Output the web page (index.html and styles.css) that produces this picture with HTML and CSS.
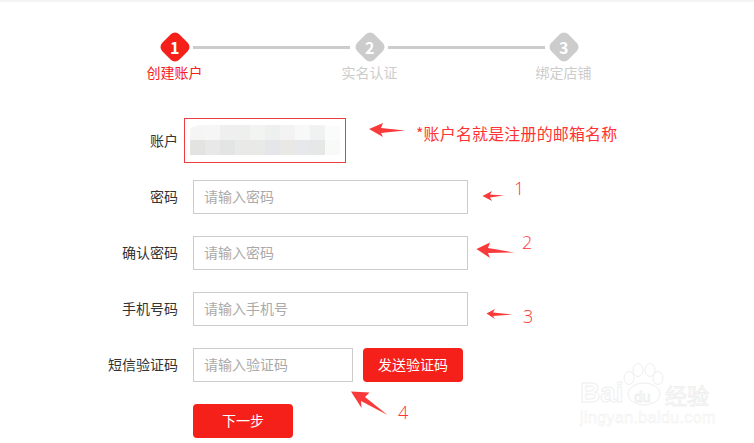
FILE: index.html
```html
<!DOCTYPE html>
<html lang="en">
<head>
    <meta charset="UTF-8">
    <title>创建账户</title>
    <link rel="stylesheet" href="styles.css">
</head>
<body>
    <div class="page">
        <div class="steps">
            <div class="step active">
                <div class="step-mark"><span>1</span></div>
                <div class="step-label">创建账户</div>
            </div>
            <div class="step-line"></div>
            <div class="step">
                <div class="step-mark"><span>2</span></div>
                <div class="step-label">实名认证</div>
            </div>
            <div class="step-line"></div>
            <div class="step">
                <div class="step-mark"><span>3</span></div>
                <div class="step-label">绑定店铺</div>
            </div>
        </div>

        <form class="form">
            <div class="row">
                <label class="row-label">账户</label>
                <div class="account">
                    <div class="blur-top"></div>
                    <div class="blur-bottom"></div>
                    <div class="account-mark"></div>
                </div>
            </div>
            <div class="row">
                <label class="row-label">密码</label>
                <input class="input" type="text" placeholder="请输入密码">
            </div>
            <div class="row">
                <label class="row-label">确认密码</label>
                <input class="input" type="text" placeholder="请输入密码">
            </div>
            <div class="row">
                <label class="row-label">手机号码</label>
                <input class="input" type="text" placeholder="请输入手机号">
            </div>
            <div class="row">
                <label class="row-label">短信验证码</label>
                <input class="input input-short" type="text" placeholder="请输入验证码">
                <button class="btn btn-send" type="button">发送验证码</button>
            </div>
            <div class="row row-last">
                <button class="btn" type="button">下一步</button>
            </div>
        </form>

        <!-- red notes drawn over the screenshot -->
        <svg class="arrows" width="754" height="443" viewBox="0 0 754 443">
            <polygon points="369,129 383,123 381,128 405,130.5 381,133 383,137"/>
            <polygon points="482.5,196 492,191 490,194.5 504,195.5 490,197.5 492,201"/>
            <polygon points="476.5,249 490,242.5 488,248 514.5,252.5 488,253 490,258"/>
            <polygon points="486.5,313.5 495,309 493,312.5 512.5,314.5 493,316 495,319"/>
            <polygon points="351,391.5 369.5,392.5 365,397 387.5,415 361,401 361.5,408"/>
        </svg>
        <span class="note note-main">*账户名就是注册的邮箱名称</span>
        <span class="note note-num note-1">1</span>
        <span class="note note-num note-2">2</span>
        <span class="note note-num note-3">3</span>
        <span class="note note-num note-4">4</span>

        <!-- watermark -->
        <div class="watermark">
            <svg class="paw" width="46" height="46" viewBox="0 0 46 46">
                <ellipse cx="8" cy="15" rx="5" ry="6.5"/>
                <ellipse cx="17" cy="7" rx="5" ry="6.5"/>
                <ellipse cx="29" cy="7" rx="5" ry="6.5"/>
                <ellipse cx="37" cy="15" rx="5" ry="6.5"/>
                <ellipse cx="23" cy="31" rx="16" ry="11"/>
            </svg>
            <span class="wm-bai">Bai</span>
            <span class="wm-du">du</span>
            <span class="wm-cn">经验</span>
            <span class="wm-url">jingyan.baidu.com</span>
        </div>
    </div>
</body>
</html>
```
FILE: styles.css
```css
* {
    box-sizing: border-box;
}
body {
    margin: 0;
    background-color: #fff;
    font-family: "Noto Sans CJK SC", "Noto Sans", sans-serif;
    font-size: 14px;
    color: #333;
}
.page {
    position: relative;
    width: 754px;
    height: 443px;
    overflow: hidden;
}

/* steps */
.steps {
    display: flex;
    align-items: flex-start;
    padding: 30px 0 0 160px;
    border-top: 2px solid #f4f4f4;
}
.step {
    display: flex;
    flex-direction: column;
    align-items: center;
    width: 29px;
    color: #ccc;
}
.step-mark {
    display: flex;
    align-items: center;
    justify-content: center;
    flex: none;
    width: 24px;
    height: 24px;
    margin: 2.5px;
    border-radius: 6px;
    background-color: #ccc;
    transform: rotate(45deg);
}
.step-mark span {
    transform: rotate(-45deg);
    color: #fff;
    font-size: 16px;
    font-weight: 700;
    line-height: 1;
}
.step-label {
    flex: none;
    margin-top: 1px;
    line-height: 20px;
    white-space: nowrap;
}
.step.active {
    color: #f5201a;
}
.step.active .step-mark {
    background-color: #f5201a;
}
.step-line {
    flex: none;
    width: 157px;
    height: 3px;
    margin: 14px 5px 0 4px;
    background-color: #ccc;
}
.step-line + .step + .step-line {
    margin-right: 4px;
}

/* form */
.form {
    margin-top: 42px;
}
.row {
    display: flex;
    align-items: center;
    gap: 15px;
    height: 34px;
    margin-bottom: 22px;
}
.row-label {
    flex: none;
    width: 178px;
    padding-bottom: 2px;
    text-align: right;
}
.row-last {
    margin-bottom: 0;
    padding-left: 193px;
}
.input {
    width: 275px;
    height: 34px;
    padding: 0 10px 2px;
    border: 1px solid #ccc;
    outline: none;
    font: inherit;
    color: #333;
}
.input::placeholder {
    color: #aaa;
    opacity: 1;
}
.input-short {
    width: 160px;
}
.btn {
    width: 100px;
    height: 34px;
    padding: 0 0 2px;
    border: 0;
    border-radius: 4px;
    background-color: #f5201a;
    color: #fff;
    font: inherit;
}
.btn-send {
    margin-left: -5px;
}

/* blurred account name */
.account {
    position: relative;
    align-self: flex-start;
    width: 150px;
    margin: 1px 0 0 -3px;
}
.blur-top,
.blur-bottom {
    height: 15px;
}
.blur-top {
    border-radius: 16px 30px 0 0 / 5px 3px 0 0;
    background: linear-gradient(90deg, #f5f5f5 0 15px, #f6f6f6 15px 30px, #efefef 30px 45px, #edf0ef 45px 60px, #f3f3f1 60px 75px, #eef0ef 75px 90px, #f3f3f3 90px 105px, #f8f8f8 105px 120px, #f0f2f1 120px 135px, #fbfbfb 135px);
}
.blur-bottom {
    background: linear-gradient(90deg, #e3e3e2 0 15px, #e8e8e8 15px 30px, #e3e5e4 30px 45px, #e9e9e8 45px 75px, #e5e6ea 75px 90px, #e9e8e7 90px 105px, #e7e8ec 105px 120px, #e6e8e8 120px 135px, #f9f9f8 135px);
}
.account-mark {
    position: absolute;
    left: -6px;
    top: -7px;
    width: 162px;
    height: 45px;
    border: 1px solid #f03c3c;
}

/* notes over the screenshot */
.arrows {
    position: absolute;
    left: 0;
    top: 0;
}
.arrows polygon {
    fill: #f83a3a;
}
.note {
    position: absolute;
    color: #f33;
    font-size: 16px;
    line-height: 20px;
    letter-spacing: 0.15px;
    white-space: nowrap;
}
.note-num {
    font-family: "Open Sans", sans-serif;
    font-size: 18px;
    font-weight: 300;
}
.note-main { left: 416px; top: 123px; }
.note-1 { left: 514px; top: 178px; }
.note-2 { left: 522px; top: 232px; }
.note-3 { left: 523px; top: 306px; }
.note-4 { left: 398px; top: 402px; }

/* watermark */
.watermark {
    position: absolute;
    left: 580px;
    top: 362px;
    width: 140px;
    height: 64px;
    color: #fff;
    -webkit-text-stroke: 1px #efefef;
    white-space: nowrap;
}
.paw {
    position: absolute;
    left: 41px;
    top: 1px;
}
.paw ellipse {
    fill: #fff;
    stroke: #eeeeee;
}
.wm-bai,
.wm-du,
.wm-cn,
.wm-url {
    position: absolute;
}
.wm-bai {
    left: 0;
    top: 15px;
    font-family: "Liberation Sans", sans-serif;
    font-size: 28px;
    font-weight: 700;
    line-height: 32px;
}
.wm-du {
    left: 54px;
    top: 27px;
    font-family: "Liberation Sans", sans-serif;
    font-size: 15px;
    line-height: 16px;
}
.wm-cn {
    left: 85px;
    top: 19px;
    font-size: 22px;
    line-height: 26px;
}
.wm-url {
    left: 0;
    top: 48px;
    font-family: "Liberation Sans", sans-serif;
    font-size: 16px;
    letter-spacing: 0.4px;
    line-height: 16px;
    -webkit-text-stroke: 0.5px #efefef;
}
```
